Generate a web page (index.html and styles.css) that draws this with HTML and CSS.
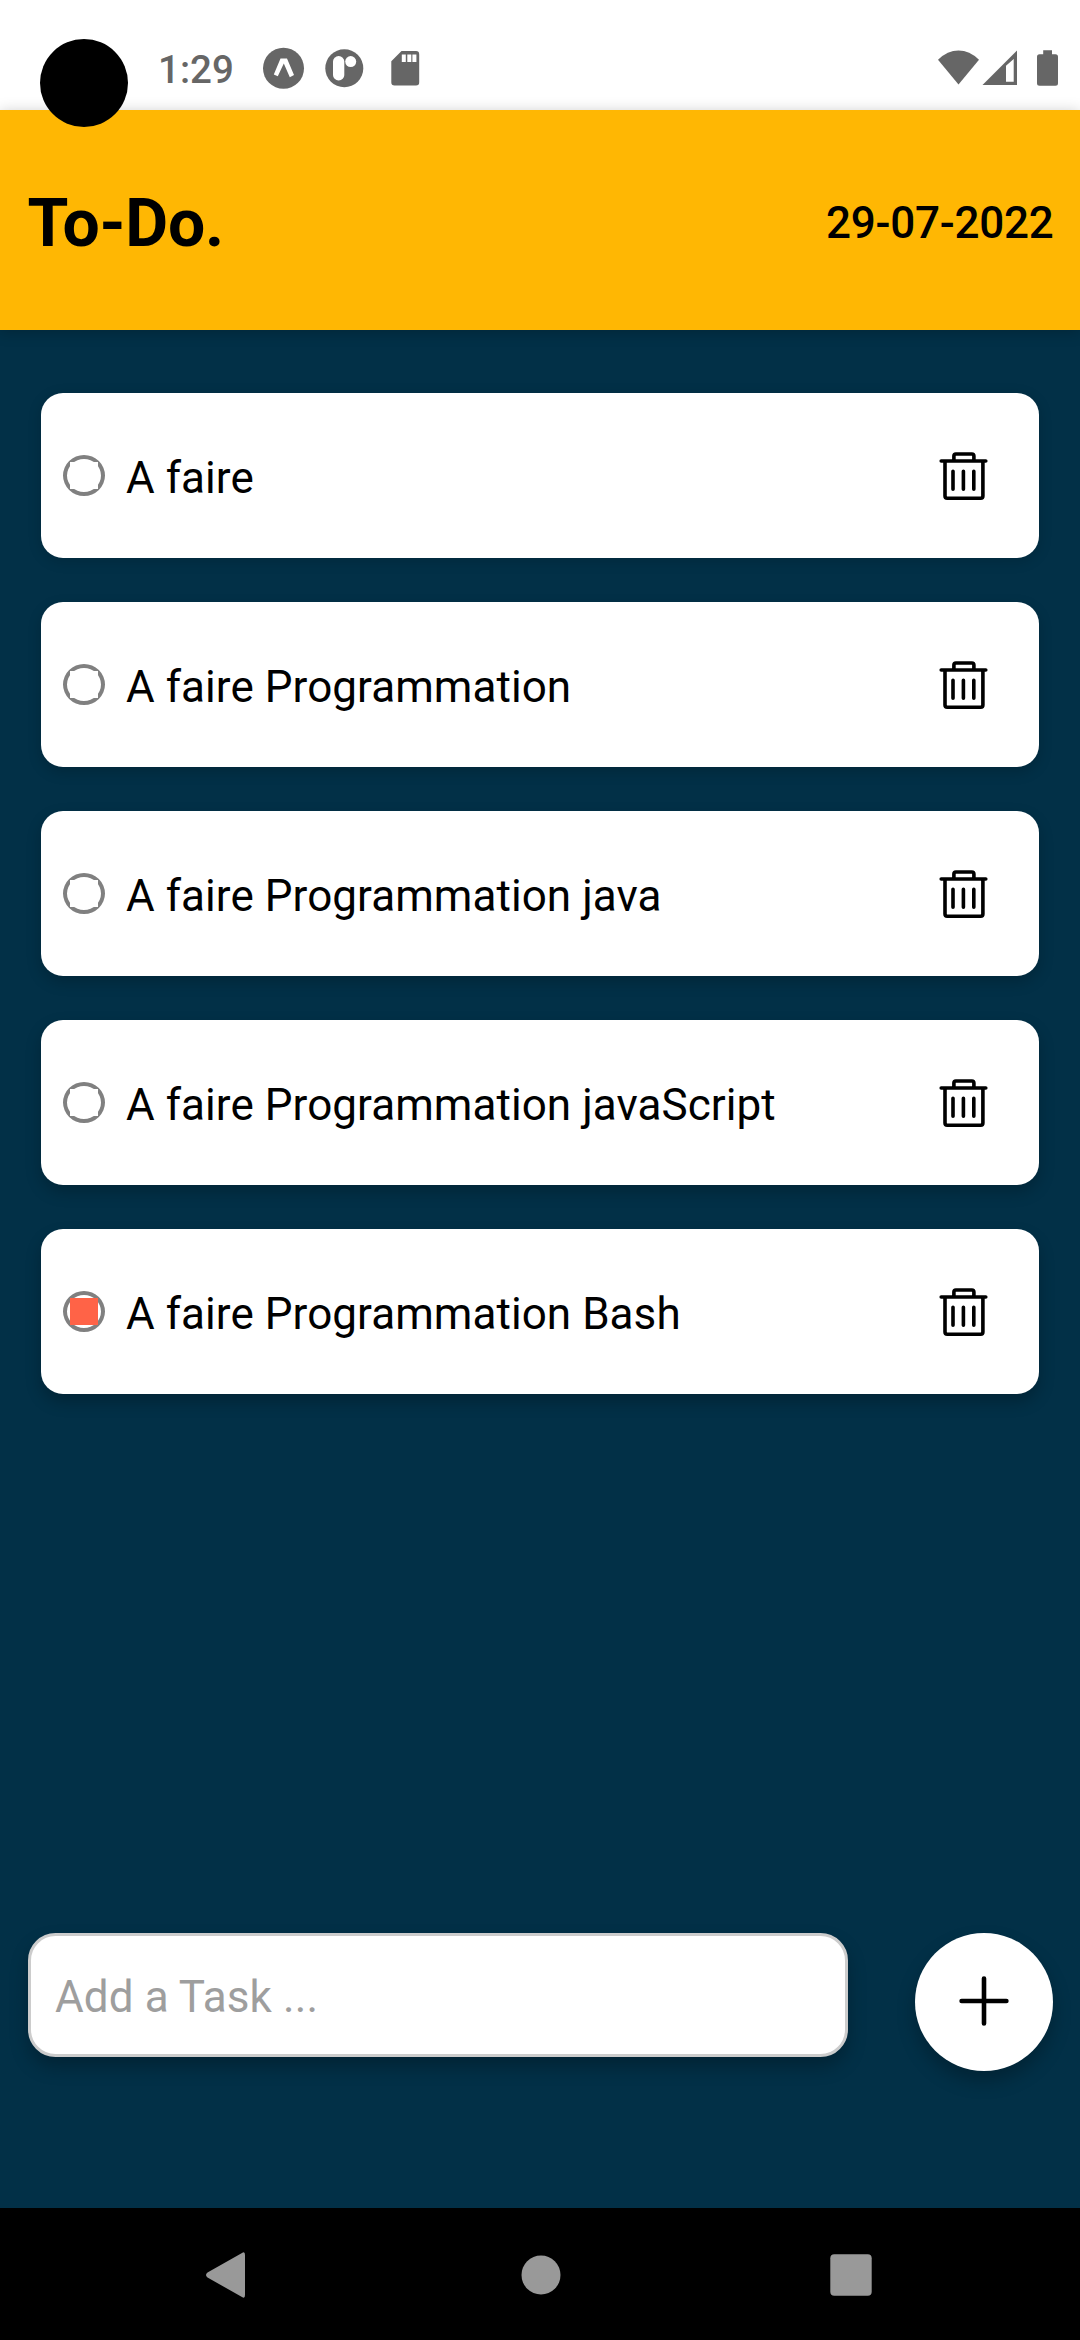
FILE: index.html
```html
<!DOCTYPE html>
<html lang="fr">
<head>
<meta charset="utf-8">
<title>To-Do.</title>
<link rel="stylesheet" href="styles.css">
</head>
<body>
<svg class="defs" aria-hidden="true">
  <symbol id="trash" viewBox="0 0 49 50">
    <g fill="none" stroke="#000" stroke-width="3.6" stroke-linecap="round" stroke-linejoin="round">
      <path d="M2.2 10H46.800M14.900 10V5a2 2 0 0 1 2-2h16a2 2 0 0 1 2 2v5M6 10v35a2.200 2.200 0 0 0 2.200 2.200h33.500a2.200 2.200 0 0 0 2.200-2.200V10M14 20.300v18M24.400 20.300v18M34.800 20.300v18"/>
    </g>
  </symbol>
</svg>
<div class="screen">
  <div class="status">
    <span class="clock">1:29</span>
    <svg class="i-expo" width="42" height="42" viewBox="0 0 42 42"><circle cx="20.500" cy="21.300" r="20.500" fill="#666"/><path fill="#fff" d="M17.500 11.500h6.500l7 16.500-4.200 2.200-6-13.700-6 12.700-4-1.700z"/></svg>
    <svg class="i-app" width="42" height="42" viewBox="0 0 42 42"><circle cx="21.300" cy="21.300" r="19" fill="#666"/><rect x="10" y="9" width="11.300" height="24.500" rx="5.600" fill="#fff"/><circle cx="27.700" cy="14.600" r="5.500" fill="#fff"/></svg>
    <svg class="i-sd" width="42" height="42" viewBox="0 0 42 42"><path fill="#666" d="M17.500 4H32a3.200 3.200 0 0 1 3.200 3.200v28A3.200 3.200 0 0 1 32 38.500H10.500a3.200 3.200 0 0 1-3.200-3.200V14.200z"/><path fill="#fff" d="M17.800 7.500h4v7.500h-4zM23.300 7.500h4v7.500h-4zM28.400 7.500h4v7.500h-4z"/></svg>
    <span class="grow"></span>
    <svg width="41" height="42" viewBox="0 0 41 42"><path fill="#666" d="M20.500 37.500 0 12.700Q9.500 3.500 20.500 3.500T41 12.700z"/></svg>
    <svg class="i-signal" width="36" height="42" viewBox="0 0 36 42"><path fill="#666" fill-rule="evenodd" d="M.5 37.900 35 3.500v34.400zM24 18.700v16h7.700V12z"/></svg>
    <svg class="i-battery" width="21" height="42" viewBox="0 0 21 42"><path fill="#666" d="M6.200 3.300H15v4h3.500A2.500 2.500 0 0 1 21 9.800v26.400a2.500 2.500 0 0 1-2.500 2.500h-16A2.500 2.500 0 0 1 0 36.200V9.800a2.500 2.500 0 0 1 2.500-2.500h3.700z"/></svg>
    <span class="camera"></span>
  </div>
  <header class="header">
    <h1 class="title">To-Do.</h1>
    <span class="date">29-07-2022</span>
  </header>
  <main class="main">
    <ul class="tasks">
      <li class="task s1"><span class="radio"><i class="dot"></i></span><span class="label">A faire</span><svg class="trash"><use href="#trash"/></svg></li>
      <li class="task s2"><span class="radio"><i class="dot"></i></span><span class="label">A faire Programmation</span><svg class="trash"><use href="#trash"/></svg></li>
      <li class="task s3"><span class="radio"><i class="dot"></i></span><span class="label">A faire Programmation java</span><svg class="trash"><use href="#trash"/></svg></li>
      <li class="task s4"><span class="radio"><i class="dot"></i></span><span class="label">A faire Programmation javaScript</span><svg class="trash"><use href="#trash"/></svg></li>
      <li class="task s5"><span class="radio"><i class="dot done"></i></span><span class="label">A faire Programmation Bash</span><svg class="trash"><use href="#trash"/></svg></li>
    </ul>
    <div class="composer">
      <div class="field">Add a Task ...</div>
      <div class="add"><svg width="50" height="50" viewBox="0 0 50 50"><path d="M25 2.600v44.800M2.600 25h44.800" stroke="#000" stroke-width="4.600" stroke-linecap="round"/></svg></div>
    </div>
  </main>
  <nav class="nav">
    <svg width="45" height="46" viewBox="0 0 45 46"><path fill="#999" d="M36 1q3-2 3 2v40q0 4-3 2L1.500 25.500q-3-2.500 0-5z"/></svg>
    <svg width="40" height="40" viewBox="0 0 40 40"><circle cx="20" cy="20" r="19.500" fill="#999"/></svg>
    <svg width="42" height="42" viewBox="0 0 42 42"><rect x=".3" y=".3" width="41.400" height="41.400" rx="4" fill="#999"/></svg>
  </nav>
</div>
</body>
</html>
```

FILE: styles.css
```css
* { box-sizing: border-box; margin: 0; padding: 0; }
body { font-family: Roboto, "Liberation Sans", sans-serif; color: #000; background: #023047; }
svg { display: block; flex: none; }
.defs { position: absolute; width: 0; height: 0; }
.screen { width: 1080px; height: 2340px; display: flex; flex-direction: column; overflow: hidden; }

.status { position: relative; height: 110px; flex: none; display: flex; align-items: center; padding: 26px 22px 0 158px; background: #fff; color: #666; }
.clock { width: 105px; padding-top: 4px; font-size: 38.5px; font-weight: 500; line-height: 42px; }
.i-app { margin-left: 18px; }
.i-sd { margin-left: 19px; }
.grow { flex: 1; }
.i-signal { margin-left: 3px; }
.i-battery { margin-left: 19px; }
.camera { position: absolute; z-index: 3; left: 40px; top: 39px; width: 88px; height: 88px; border-radius: 50%; background: #000; }

.header { position: relative; height: 220px; flex: none; display: flex; align-items: center; justify-content: space-between; padding: 0 26.5px 0 27.5px; background: #ffb703; box-shadow: 0 2px 14px rgba(0, 0, 0, .22); }
.title { font-size: 66px; font-weight: 700; line-height: 78px; padding-top: 7px; letter-spacing: -.25px; }
.date { font-size: 44px; font-weight: 500; line-height: 52px; padding-top: 6px; letter-spacing: -.25px; }

.main { flex: 1; display: flex; flex-direction: column; justify-content: space-between; padding: 63px 27px 137px 28px; }
.tasks { list-style: none; display: flex; flex-direction: column; gap: 44px; padding: 0 14px 0 13px; }
.task { height: 165px; display: flex; align-items: center; padding: 0 51px 0 22px; border-radius: 22px; background: #fff; }
.s1 { box-shadow: 0 3px 14px rgba(0, 0, 0, .16); }
.s2 { box-shadow: 0 5px 14px rgba(0, 0, 0, .18); }
.s3 { box-shadow: 0 6px 15px rgba(0, 0, 0, .2); }
.s4 { box-shadow: 0 7px 16px rgba(0, 0, 0, .22); }
.s5 { box-shadow: 0 8px 16px rgba(0, 0, 0, .24); }
.radio { width: 42px; height: 41px; flex: none; display: flex; align-items: center; justify-content: center; border: 4px solid #808080; border-radius: 50%; }
.dot { width: 28px; height: 27px; flex: none; background: #fff; }
.done { background: #ff6347; }
.label { flex: 1; margin-left: 21px; padding-top: 5px; font-size: 44px; line-height: 52px; letter-spacing: .06px; }
.trash { width: 49px; height: 50px; }

.composer { display: flex; align-items: flex-start; justify-content: space-between; }
.field { width: 820px; height: 124px; border: 3px solid #ccc; border-radius: 27.5px; padding: 0 24px; background: #fff; color: #9e9e9e; font-size: 44px; line-height: 122px; letter-spacing: .1px; box-shadow: 0 10px 18px rgba(0, 0, 0, .25); }
.add { width: 138px; height: 138px; display: flex; align-items: center; justify-content: center; padding-bottom: 2px; border-radius: 50%; background: #fff; box-shadow: 0 10px 18px rgba(0, 0, 0, .25); }

.nav { height: 132px; flex: none; display: flex; align-items: center; justify-content: space-between; padding: 1px 208px 0 206px; background: #000; }
```
